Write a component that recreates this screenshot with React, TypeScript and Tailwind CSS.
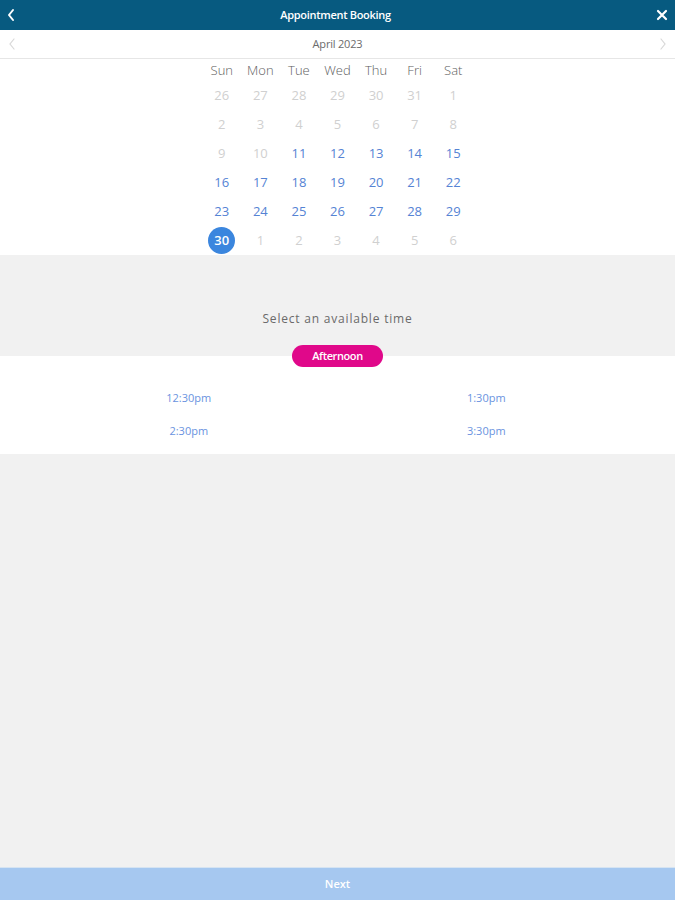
import React from "react";

const weekdays = ["Sun", "Mon", "Tue", "Wed", "Thu", "Fri", "Sat"];
type Day = { n: number; s: "off" | "on" | "sel" };
const rows: Day[][] = [
  [26, 27, 28, 29, 30, 31, 1].map((n) => ({ n, s: "off" as const })),
  [2, 3, 4, 5, 6, 7, 8].map((n) => ({ n, s: "off" as const })),
  [9, 10, 11, 12, 13, 14, 15].map((n) => ({ n, s: n < 11 ? ("off" as const) : ("on" as const) })),
  [16, 17, 18, 19, 20, 21, 22].map((n) => ({ n, s: "on" as const })),
  [23, 24, 25, 26, 27, 28, 29].map((n) => ({ n, s: "on" as const })),
  [30, 1, 2, 3, 4, 5, 6].map((n, i) => ({ n, s: i === 0 ? ("sel" as const) : ("off" as const) })),
];

export default function App() {
  return (
    <div
      className="w-[675px] h-[900px] flex flex-col bg-[#f1f1f1]"
      style={{ fontFamily: '"Open Sans", "Noto Sans", sans-serif' }}
    >
      {/* Header */}
      <div className="h-[30px] bg-[#075a80] flex items-center justify-between px-[6px] text-white">
        <svg width="10" height="14" viewBox="0 0 10 14" fill="none">
          <path d="M7 2 L3 7 L7 12" stroke="white" strokeWidth="2" strokeLinecap="round" strokeLinejoin="round" />
        </svg>
        <div className="text-[11px] font-semibold tracking-[-0.3px] pt-[1px]">Appointment Booking</div>
        <svg width="14" height="14" viewBox="0 0 14 14" fill="none">
          <path d="M3 3 L11 11 M11 3 L3 11" stroke="white" strokeWidth="2.2" strokeLinecap="round" />
        </svg>
      </div>

      {/* Month selector */}
      <div className="h-[29px] bg-white border-b border-[#e6e6e6] flex items-center justify-between px-[8px]">
        <svg width="8" height="14" viewBox="0 0 8 14" fill="none">
          <path d="M6 2 L2 7 L6 12" stroke="#d8d8d8" strokeWidth="1.2" strokeLinecap="round" />
        </svg>
        <div className="text-[11px] text-[#6b6b6b] tracking-[-0.2px]">April 2023</div>
        <svg width="8" height="14" viewBox="0 0 8 14" fill="none">
          <path d="M2 2 L6 7 L2 12" stroke="#d8d8d8" strokeWidth="1.2" strokeLinecap="round" />
        </svg>
      </div>

      {/* Calendar */}
      <div className="bg-white flex justify-center">
        <div className="w-[270px]">
          <div className="grid grid-cols-7 h-[22px] items-center pt-[2px]">
            {weekdays.map((d) => (
              <div key={d} className="text-center text-[13px] text-[#606060] font-light">
                {d}
              </div>
            ))}
          </div>
          {rows.map((r, i) => (
            <div key={i} className="grid grid-cols-7 h-[29px] items-center">
              {r.map((d, j) => (
                <div key={j} className="flex justify-center items-center">
                  {d.s === "sel" ? (
                    <div className="w-[27px] h-[27px] rounded-full bg-[#3b86de] text-white text-[13px] font-semibold flex items-center justify-center">
                      {d.n}
                    </div>
                  ) : (
                    <span className={`text-[13px] ${d.s === "on" ? "text-[#5583d4]" : "text-[#d0d0d0]"}`}>{d.n}</span>
                  )}
                </div>
              ))}
            </div>
          ))}
        </div>
      </div>

      {/* Select time */}
      <div className="h-[101px] flex flex-col items-center justify-end pb-[28px]">
        <div className="text-[12px] text-[#6a6a6a] tracking-[0.8px]">Select an available time</div>
      </div>

      <div className="bg-white flex flex-col items-center pb-[7px]">
        <div className="-mt-[11px] h-[22px] w-[91px] rounded-full bg-[#e0088a] text-white text-[11px] font-semibold tracking-[-0.4px] flex items-center justify-center">
          Afternoon
        </div>
        <div className="w-full px-[40px] pt-[14px] grid grid-cols-2">
          {["12:30pm", "1:30pm", "2:30pm", "3:30pm"].map((t) => (
            <div key={t} className="h-[33px] flex items-center justify-center text-[11px] text-[#6a93e0] pt-[1px]">
              {t}
            </div>
          ))}
        </div>
      </div>

      <div className="flex-1" />

      {/* Next */}
      <div className="h-[33px] bg-[#a6c8f0] border-t border-[#d6e4f2] flex items-center justify-center">
        <div className="text-[11px] text-white font-semibold">Next</div>
      </div>
    </div>
  );
}
